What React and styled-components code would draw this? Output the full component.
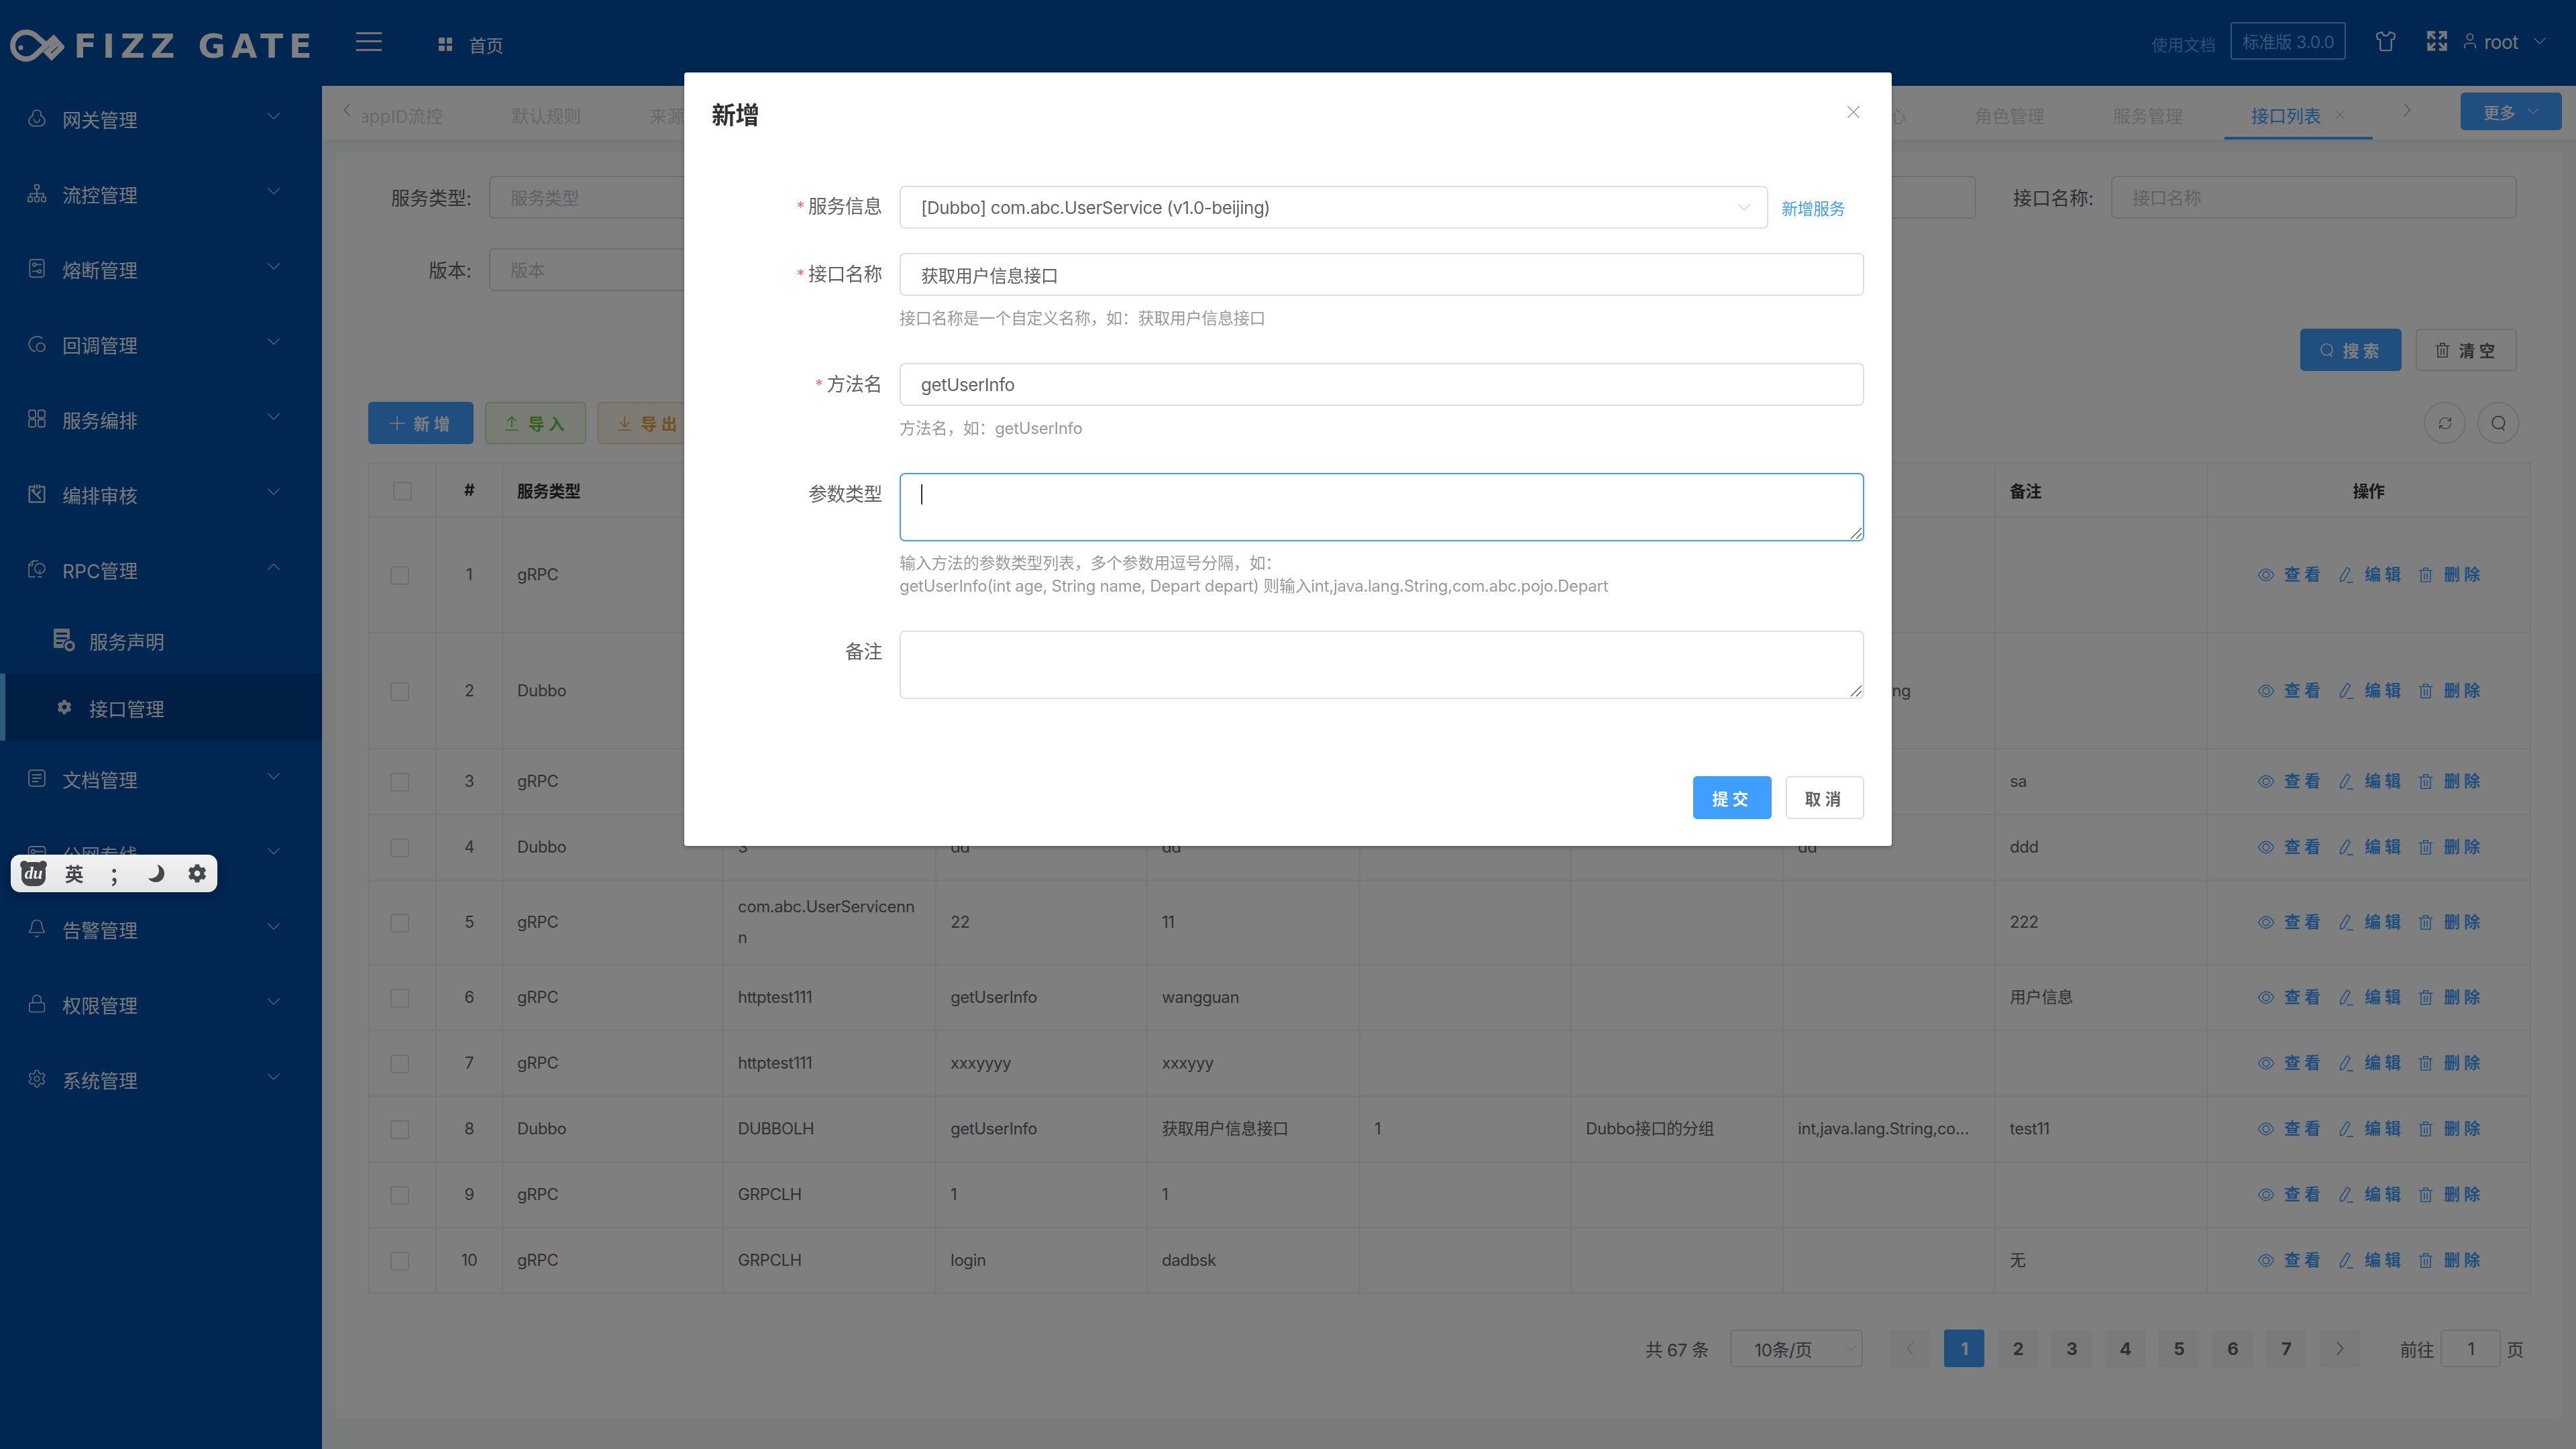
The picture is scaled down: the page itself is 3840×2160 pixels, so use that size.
import React from 'react';
import styled, { createGlobalStyle } from 'styled-components';
import { FaCog } from 'react-icons/fa';
import { Bell, Lock, Settings, Shirt, RefreshCw, User } from 'lucide-react';

const GlobalStyle = createGlobalStyle`
  html, body { margin: 0; padding: 0; height: 100%; overflow: hidden; }
  body { font-family: Inter, "Noto Sans CJK SC", "Noto Sans", sans-serif; background: #f5f7fa; color: #606266; }
  * { box-sizing: border-box; letter-spacing: -0.018em; }
`;

const PRIMARY = '#409eff';

const Shell = styled.div`
  display: grid;
  grid-template-columns: 480px 1fr;
  width: 3840px;
  height: 2160px;
  overflow: hidden;
`;

/* sidebar */
const Sidebar = styled.aside`
  background: #004ca4;
  color: #f0f4f8;
  display: flex;
  flex-direction: column;
`;
const LogoBar = styled.div`
  height: 120px;
  flex-shrink: 0;
  display: flex;
  align-items: center;
  padding: 18px 0 0 14px;
  color: #fff;
`;
const LogoText = styled.span`
  margin-left: 14px;
  font-family: "DejaVu Sans", sans-serif;
  font-weight: 700;
  font-size: 50px;
  line-height: 1;
  letter-spacing: 8.5px;
  white-space: nowrap;
`;
const NavItem = styled.div`
  height: ${p => (p.$sub ? 100 : 112)}px;
  flex-shrink: 0;
  display: flex;
  align-items: center;
  font-size: 28px;
  padding-left: ${p => (p.$sub ? (p.$active ? 68 : 76) : 40)}px;
  background: ${p => (p.$active ? '#003e8a' : 'transparent')};
  border-left: ${p => (p.$active ? `8px solid #5ab4ff` : '0')};
  color: #eef2f6;
`;
const NavIcon = styled.span`
  width: ${p => (p.$sub ? 40 : 30)}px;
  height: 34px;
  margin-right: ${p => (p.$sub ? 17 : 23)}px;
  display: flex;
  align-items: center;
  justify-content: center;
  flex-shrink: 0;
  color: #d4dae1;
`;
const NavLabel = styled.span`
  flex: 1;
  line-height: 40px;
  padding-top: 7px;
  letter-spacing: 0;
`;
const NavChevron = styled.span`
  width: 20px;
  margin-right: 62px;
  margin-top: -6px;
  display: flex;
  color: #dfe5ec;
`;

/* main column */
const Main = styled.div`
  display: flex;
  flex-direction: column;
  min-width: 0;
`;
const Topbar = styled.header`
  height: 128px;
  flex-shrink: 0;
  background: #004ca4;
  border-left: 2px solid rgba(0, 0, 0, 0.12);
  display: flex;
  align-items: center;
  color: #f0f0f0;
`;
const Burger = styled.div`
  margin-left: 49px;
  width: 38px;
  height: 28px;
  margin-top: -4px;
  border-top: 3px solid #e8e8e8;
  border-bottom: 3px solid #e8e8e8;
  position: relative;
  &::after {
    content: '';
    position: absolute;
    left: 0;
    right: 0;
    top: 9px;
    height: 3px;
    background: #e8e8e8;
  }
`;
const HomeTab = styled.div`
  margin-left: 85px;
  display: flex;
  align-items: center;
  gap: 25px;
  font-size: 26px;
  padding-top: 4px;
`;
const HomeGrid = styled.span`
  width: 20px;
  height: 20px;
  display: grid;
  grid-template-columns: 1fr 1fr;
  gap: 3px;
  & > i { background: #f0f0f0; border-radius: 1px; }
`;
const TopRight = styled.div`
  margin-left: auto;
  display: flex;
  align-items: center;
  padding-right: 44px;
`;
const DocLink = styled.span`
  font-size: 24px;
  letter-spacing: 0;
  color: #4ea0f0;
  margin-right: 22px;
  padding-top: 2px;
`;
const VersionBox = styled.span`
  width: 172px;
  height: 56px;
  border: 2px solid #5cb0ff;
  border-radius: 4px;
  font-size: 25px;
  color: #6ab0f5;
  display: flex;
  align-items: center;
  justify-content: center;
  margin-top: -6px;
  white-space: nowrap;
`;
const TopIconSlot = styled.span`
  display: flex;
  margin-left: ${p => p.$ml}px;
  margin-top: -6px;
`;
const UserName = styled.span`
  font-size: 28px;
  margin: -3px 22px 0 7px;
`;

/* tabs */
const TabBar = styled.div`
  height: 80px;
  flex-shrink: 0;
  background: #fff;
  display: flex;
  box-shadow: 0 3px 10px rgba(0, 0, 0, 0.06);
  position: relative;
`;
const TabArrow = styled.span`
  width: ${p => p.$w}px;
  flex-shrink: 0;
  display: flex;
  align-items: center;
  justify-content: ${p => p.$justify || 'center'};
  padding: ${p => p.$pad || 0};
  color: #9a9a9a;
  margin-top: -8px;
`;
const TabScroll = styled.div`
  flex: 1;
  min-width: 0;
  overflow: hidden;
  display: flex;
`;
const TabTrack = styled.div`
  display: flex;
  margin-left: -55px;
  flex-shrink: 0;
`;
const Tab = styled.div`
  height: 80px;
  padding: 6px ${p => (p.$active ? 0 : 51)}px 0 51px;
  display: flex;
  align-items: center;
  font-size: 26px;
  letter-spacing: 0;
  white-space: nowrap;
  color: ${p => (p.$active ? PRIMARY : '#d2d2d2')};
  position: relative;
  flex-shrink: 0;
  ${p => p.$active && `
    width: 232px;
    &::after {
      content: '';
      position: absolute;
      left: 11px;
      width: 221px;
      bottom: 0;
      height: 4px;
      background: ${PRIMARY};
    }
  `}
`;
const TabClose = styled.span`
  margin-left: 21px;
  display: flex;
`;
const MoreButton = styled.button`
  width: 151px;
  height: 56px;
  margin: 10px 21px 0 62px;
  flex-shrink: 0;
  border: 0;
  border-radius: 6px;
  background: ${PRIMARY};
  color: #fff;
  font: 500 24px Inter, "Noto Sans CJK SC", sans-serif;
  display: flex;
  align-items: center;
  justify-content: center;
  gap: 18px;
`;

/* content card */
const Content = styled.main`
  flex: 1;
  min-height: 0;
  padding: 20px 21px 46px 20px;
  background: #f5f7fa;
`;
const Card = styled.section`
  background: #fff;
  border-radius: 8px;
  height: 100%;
  padding: 34px 48px 0 49px;
`;
const FilterGrid = styled.div`
  display: grid;
  grid-template-columns: repeat(4, 785px);
  column-gap: 21px;
  row-gap: 44px;
`;
const FilterField = styled.div`
  display: flex;
  align-items: center;
  height: 64px;
`;
const FilterLabel = styled.label`
  width: 180px;
  padding-right: 26px;
  font-size: 28px;
  letter-spacing: 0;
  text-align: right;
  flex-shrink: 0;
  color: #606266;
  white-space: nowrap;
`;
const FilterInput = styled.div`
  flex: 1;
  height: 64px;
  padding: 0 30px 2px;
  border: 2px solid #dcdfe6;
  border-radius: 8px;
  color: #c0c4cc;
  font-size: 26px;
  display: flex;
  align-items: center;
`;
const ActionsRow = styled.div`
  margin-top: 56px;
  padding-right: 19px;
  display: flex;
  justify-content: flex-end;
  gap: 21px;
`;
const ToolRow = styled.div`
  margin-top: 46px;
  display: flex;
  align-items: center;
  gap: 17px;
`;
const ToolSpacer = styled.div`
  flex: 1;
`;
const tone = {
  primary: { bg: PRIMARY, fg: '#fff', bd: PRIMARY },
  plain: { bg: '#fff', fg: '#606266', bd: '#dcdfe6' },
  green: { bg: '#f0f9eb', fg: '#67c23a', bd: '#c2e7b0' },
  orange: { bg: '#fdf6ec', fg: '#e6a23c', bd: '#f5dab1' },
};
const Btn = styled.button`
  width: ${p => p.$w || 151}px;
  height: 63px;
  border: 2px solid ${p => tone[p.$tone].bd};
  background: ${p => tone[p.$tone].bg};
  color: ${p => tone[p.$tone].fg};
  border-radius: 6px;
  font: 600 24px Inter, "Noto Sans CJK SC", sans-serif;
  letter-spacing: 6px;
  display: flex;
  align-items: center;
  justify-content: center;
  gap: 12px;
  padding: 0;
`;
const CircleBtn = styled.button`
  width: 63px;
  height: 63px;
  border-radius: 50%;
  border: 2px solid #dcdfe6;
  background: #fff;
  color: #606266;
  display: flex;
  align-items: center;
  justify-content: center;
  padding: 0;
  margin-right: ${p => p.$mr || 0}px;
`;

/* table */
const Table = styled.table`
  margin-top: 27px;
  width: 3222px;
  table-layout: fixed;
  border-collapse: collapse;
  font-size: 24px;
  color: #606266;
`;
const Tr = styled.tr`
  height: ${p => p.$h}px;
`;
const Th = styled.th`
  border: 2px solid #ebeef5;
  padding: 0 21px;
  font-weight: 700;
  color: #303133;
  text-align: ${p => (p.$center ? 'center' : 'left')};
`;
const Td = styled.td`
  border: 2px solid #ebeef5;
  padding: 0 ${p => (p.$ops ? 0 : 21)}px;
  line-height: 46px;
  word-break: break-all;
  text-align: ${p => (p.$center ? 'center' : 'left')};
  ${p => p.$clip && 'white-space: nowrap; overflow: hidden; text-overflow: ellipsis;'}
`;
const CheckBox = styled.span`
  display: inline-block;
  vertical-align: middle;
  width: 28px;
  height: 28px;
  margin-right: ${p => (p.$row ? 8 : 0)}px;
  border: 2px solid #dcdfe6;
  border-radius: 4px;
  background: #fff;
`;
const Ops = styled.div`
  display: flex;
  align-items: center;
  justify-content: center;
  gap: 24px;
  white-space: nowrap;
  color: ${PRIMARY};
`;
const OpLink = styled.span`
  display: flex;
  align-items: center;
  gap: 14px;
  font-weight: 600;
  letter-spacing: 6px;
  margin-right: -6px;
`;

/* pagination */
const Pager = styled.div`
  margin-top: 53px;
  width: 3222px;
  padding-right: 9px;
  height: 56px;
  display: flex;
  justify-content: flex-end;
  align-items: center;
  font-size: 26px;
  color: #606266;
`;
const PagerSelect = styled.div`
  width: 198px;
  height: 56px;
  margin: 0 41px 0 32px;
  border: 2px solid #dcdfe6;
  border-radius: 6px;
  color: #606266;
  display: flex;
  align-items: center;
  justify-content: space-between;
  padding: 0 14px 0 34px;
  white-space: nowrap;
`;
const PageBtn = styled.span`
  width: 60px;
  height: 56px;
  margin-right: ${p => p.$mr ?? 20}px;
  border-radius: 4px;
  background: ${p => (p.$active ? PRIMARY : '#f4f4f5')};
  color: ${p => (p.$active ? '#fff' : p.$muted ? '#c0c4cc' : '#606266')};
  font-weight: 700;
  display: flex;
  align-items: center;
  justify-content: center;
`;
const PagerJump = styled.div`
  width: 90px;
  height: 56px;
  margin: 0 8px 0 10px;
  border: 2px solid #dcdfe6;
  border-radius: 6px;
  display: flex;
  align-items: center;
  justify-content: center;
`;
const PagerGo = styled.span`
  margin-left: 59px;
`;

/* dialog */
const Mask = styled.div`
  position: fixed;
  inset: 0;
  background: rgba(0, 0, 0, 0.5);
  display: flex;
  justify-content: center;
  padding-top: 108px;
  z-index: 10;
`;
const Dialog = styled.div`
  width: 1800px;
  height: 1153px;
  background: #fff;
  border-radius: 4px;
  box-shadow: 0 2px 6px rgba(0, 0, 0, 0.3);
`;
const DialogHead = styled.div`
  height: 168px;
  padding: 40px 46px 0 41px;
  display: flex;
  justify-content: space-between;
  align-items: flex-start;
`;
const DialogTitle = styled.h2`
  margin: 0;
  font-size: 36px;
  line-height: 48px;
  font-weight: 600;
  color: #303133;
`;
const DialogClose = styled.span`
  display: flex;
  margin-top: 8px;
  color: #909399;
`;
const DialogBody = styled.div`
  padding-right: 41px;
`;
const FormRow = styled.div`
  display: grid;
  grid-template-columns: 321px 1fr;
  margin-bottom: ${p => (p.$tight ? 35 : 49)}px;
`;
const FormLabel = styled.label`
  padding-right: 26px;
  text-align: right;
  font-size: 28px;
  line-height: 64px;
  color: #606266;
`;
const Star = styled.span`
  color: #f56c6c;
  margin-right: 6px;
  font-size: 24px;
`;
const SelectLine = styled.div`
  display: flex;
  align-items: center;
`;
const SelectBox = styled.div`
  width: 1295px;
  height: 64px;
  padding: 0 30px;
  border: 2px solid #dcdfe6;
  border-radius: 8px;
  font-size: 26px;
  color: #606266;
  display: flex;
  align-items: center;
  justify-content: space-between;
`;
const SelectArrow = styled.span`
  display: flex;
  color: #c0c4cc;
  margin-right: -6px;
`;
const AddLink = styled.a`
  margin-left: 20px;
  font-size: 24px;
  color: ${PRIMARY};
`;
const TextInput = styled.input`
  display: block;
  width: 100%;
  height: 64px;
  padding: 0 30px;
  border: 2px solid #dcdfe6;
  border-radius: 8px;
  outline: none;
  color: #606266;
  font: 26px Inter, "Noto Sans CJK SC", sans-serif;
`;
const AreaWrap = styled.div`
  position: relative;
  height: 102px;
`;
const Area = styled.textarea`
  display: block;
  width: 100%;
  height: 102px;
  padding: 12px 30px;
  border: 2px solid ${p => (p.$focus ? PRIMARY : '#dcdfe6')};
  border-radius: 8px;
  outline: none;
  resize: none;
  color: #606266;
  font: 26px Inter, "Noto Sans CJK SC", sans-serif;
`;
const Caret = styled.span`
  position: absolute;
  left: 32px;
  top: 17px;
  width: 2px;
  height: 30px;
  background: #303133;
`;
const Grip = styled.svg`
  position: absolute;
  right: 2px;
  bottom: 2px;
`;
const Hint = styled.div`
  margin-top: ${p => p.$mt || 17}px;
  font-size: 24px;
  letter-spacing: -0.3px;
  line-height: 34px;
  color: #999;
`;
const DialogFoot = styled.div`
  margin-top: 115px;
  display: flex;
  justify-content: flex-end;
  gap: 21px;
`;
const FootBtn = styled.button`
  width: 117px;
  height: 64px;
  border: 2px solid ${p => (p.$primary ? PRIMARY : '#dcdfe6')};
  background: ${p => (p.$primary ? PRIMARY : '#fff')};
  color: ${p => (p.$primary ? '#fff' : '#606266')};
  border-radius: 6px;
  font: 600 24px Inter, "Noto Sans CJK SC", sans-serif;
  letter-spacing: 6px;
  padding: 0;
`;

/* floating IME bar */
const ImeBar = styled.div`
  position: fixed;
  left: 16px;
  top: 1274px;
  width: 308px;
  height: 56px;
  border-radius: 14px;
  background: linear-gradient(#f2f2f2, #e4e4e4);
  box-shadow: 0 4px 20px rgba(0, 0, 0, 0.25);
  z-index: 20;
  color: #44474c;
  display: grid;
  grid-template-columns: repeat(5, 61px);
  align-items: center;
  padding-left: 3px;
`;
const ImeCell = styled.span`
  display: flex;
  justify-content: center;
  padding-left: ${p => p.$pl || 0}px;
  font-size: ${p => p.$fs || 28}px;
  font-weight: 700;
`;

/* drawings */
const Line = ({ size = 30, sw = 1.5, children, ...rest }) => (
  <svg width={size} height={size} viewBox="0 0 24 24" fill="none" stroke="currentColor" strokeWidth={sw} strokeLinecap="round" strokeLinejoin="round" {...rest}>
    {children}
  </svg>
);
const Down = ({ size = 20 }) => <Line size={size} sw={1.4}><path d="M2 7l10 10L22 7" /></Line>;
const Up = ({ size = 20 }) => <Line size={size} sw={1.4}><path d="M2 17L12 7l10 10" /></Line>;
const Left = ({ size = 22 }) => <Line size={size} sw={1.4}><path d="M16 2L7 12l9 10" /></Line>;
const Right = ({ size = 22 }) => <Line size={size} sw={1.4}><path d="M8 2l9 10-9 10" /></Line>;
const Close = ({ size = 22 }) => <Line size={size} sw={1.5}><path d="M3 3l18 18M21 3L3 21" /></Line>;
const Search = ({ size = 24 }) => <Line size={size} sw={1.6}><circle cx="11.5" cy="11" r="8.5" /><path d="M16.5 18.5l2.5 3" /></Line>;
const Trash = ({ size = 26 }) => <Line size={size} sw={1.5}><path d="M3 6h18M9 6V2.5h6V6M5.5 6v15.5h13V6M10 10v8M14 10v8" /></Line>;
const Eye = ({ size = 26 }) => <Line size={size} sw={1.4}><path d="M1.5 12C4.5 6.5 8 4 12 4s7.5 2.5 10.5 8c-3 5.5-6.5 8-10.5 8s-7.5-2.5-10.5-8z" /><circle cx="12" cy="12" r="4.5" /></Line>;
const Pen = ({ size = 28 }) => <Line size={size} sw={1.4}><path d="M13.5 2.5l4 2.5-8 14-4.5 1.5-.2-4.5zM14 21.5h7" /></Line>;
const ArrowUpLine = () => <Line size={26} sw={1.5}><path d="M12 17V3M6 9l6-6 6 6M4 21.5h16" /></Line>;
const ArrowDownLine = () => <Line size={26} sw={1.5}><path d="M12 3v14M6 11l6 6 6-6M4 21.5h16" /></Line>;
const Plus = () => <Line size={26} sw={1.3}><path d="M12 2v20M2 12h20" /></Line>;
const Fullscreen = () => (
  <Line size={34} sw={2.8} strokeLinecap="butt" strokeLinejoin="miter">
    <path d="M3 10V3h7M3 3l7 7M14 3h7v7M21 3l-7 7M3 14v7h7M3 21l7-7M21 14v7h-7M21 21l-7-7" />
  </Line>
);
const LogoMark = () => (
  <svg width="82" height="50" viewBox="0 0 82 50" fill="none" stroke="currentColor" strokeWidth="8" strokeLinejoin="miter">
    <path d="M57 25L39 9C35 6 30 4 25 4A20 20 0 0 0 25 44C31 44 35 42 39 38L66 13L78 26L63 41L56 34L66 25L62 21" />
    <circle cx="17" cy="27" r="3.5" fill="currentColor" stroke="none" />
  </svg>
);
const BearBadge = () => (
  <svg width="40" height="40" viewBox="0 0 40 40">
    <circle cx="6" cy="7" r="6" fill="#44474c" />
    <circle cx="34" cy="7" r="6" fill="#44474c" />
    <rect x="2" y="3" width="36" height="36" rx="13" fill="#44474c" />
    <text x="20" y="28" textAnchor="middle" fontFamily="Liberation Serif, serif" fontStyle="italic" fontWeight="700" fontSize="26" fill="#eee">du</text>
  </svg>
);
const Moon = () => (
  <svg width="26" height="28" viewBox="0 0 26 28"><path d="M14 1C19 2 25 6 25 14c0 8-6 13-12 13C8 27 3 25 1 21c8 2 16-3 16-11 0-4-1-7-3-9z" fill="#44474c" /></svg>
);

const navIcons = {
  gateway: <Line><path d="M12 2.5c-3 0-5 2-5 4.8 0 .6.1 1.2.3 1.7C4.6 10.3 2.5 12.8 2.5 15.5c0 3.5 2.8 6 6.5 6h6c3.7 0 6.5-2.5 6.5-6 0-2.700-2.100-5.200-4.800-6.500.2-.5.3-1.100.3-1.700 0-2.800-2-4.800-5-4.800z" /><path d="M8.5 13.5c.6 2.600 2 3.800 3.500 3.800s2.900-1.200 3.500-3.800" /></Line>,
  flow: <Line><rect x="9.5" y="2" width="5" height="5" rx=".8" /><rect x="1.5" y="16.5" width="5" height="5.500" rx=".8" /><rect x="9.5" y="16.5" width="5" height="5.500" rx=".8" /><rect x="17.5" y="16.5" width="5" height="5.500" rx=".8" /><path d="M12 7v9.5M4 16.5V12.5h16v4" /></Line>,
  fuse: <Line><rect x="3.5" y="1.5" width="17" height="21" rx="3" /><circle cx="9" cy="7.5" r="1.8" /><path d="M11 7.5h6M7 15.5h6" /><circle cx="15" cy="15.5" r="1.8" /></Line>,
  callback: <Line><path d="M18 5.5A10 10 0 0 0 2.5 12c0 5 3.5 9 7.5 9.5" /><circle cx="16.5" cy="16.5" r="5" /></Line>,
  compose: <Line><rect x="2.5" y="2" width="8" height="9" rx="2" /><rect x="13.5" y="2" width="8" height="9" rx="2" /><rect x="2.5" y="13" width="8" height="9" rx="2" /><rect x="13.5" y="13" width="8" height="9" rx="2" /></Line>,
  audit: <Line sw={2}><path d="M7 3.5H3V21c0 .5.5 1 1 1h16c.5 0 1-.5 1-1V3.500h-4" /><path d="M9 2v3M12 2v3M15 2v3" /><path d="M7 9l9 9M16 9l-4 4M6 8c1-1 2.500-1 3 0l-1 1" /></Line>,
  rpc: <Line sw={1.3}><path d="M13 2.500H7L2.500 7v14.500h7" /><path d="M2.500 7.500H7V3" /><circle cx="15.500" cy="11.500" r="6" /><path d="M13.500 21.500h4M15.500 17.500v-3.500" /></Line>,
  doc: <Line><rect x="2.5" y="2.5" width="19" height="19" rx="3" /><path d="M7 8h10M7 12h10M7 16h6" /></Line>,
  line: <Line><rect x="2" y="4" width="20" height="16" rx="3" /><circle cx="7.5" cy="10" r="2.2" /><path d="M9.7 10H19M5 15h6" /></Line>,
  alarm: <Bell size={32} strokeWidth={1.3} />,
  lock: <Lock size={32} strokeWidth={1.3} />,
  system: <Settings size={32} strokeWidth={1.3} />,
};
const DeclareIcon = () => (
  <svg width="34" height="36" viewBox="0 0 34 36">
    <path fill="currentColor" fillRule="evenodd" d="M1 3a2 2 0 0 1 2-2h20a2 2 0 0 1 2 2v14a9 9 0 0 0-9 12v1H3a2 2 0 0 1-2-2zM5 7v3h16V7zm0 7v3h16v-3zm0 7v3h9v-3z" />
    <circle cx="25" cy="27" r="6" fill="none" stroke="currentColor" strokeWidth="4" />
  </svg>
);

const menuTop = [
  ['网关管理', 'gateway'], ['流控管理', 'flow'], ['熔断管理', 'fuse'], ['回调管理', 'callback'],
  ['服务编排', 'compose'], ['编排审核', 'audit'],
];
const menuBottom = [
  ['文档管理', 'doc'], ['公网专线', 'line'], ['告警管理', 'alarm'], ['权限管理', 'lock'], ['系统管理', 'system'],
];

const MenuRow = ({ label, icon, open }) => (
  <NavItem>
    <NavIcon>{navIcons[icon]}</NavIcon>
    <NavLabel>{label}</NavLabel>
    <NavChevron>{open ? <Up /> : <Down />}</NavChevron>
  </NavItem>
);

const tabs = ['appID流控', '默认规则', '来源限流', '路由管理', '客户端管理', '负载均衡', '应用管理与权限配置及分组策略设置', '插件API', '灰度发布', '消息中心', '角色管理', '服务管理'];

const widths = [100, 99, 329, 317, 315, 317, 315, 316, 316, 316, 482];

const rows = [
  { h: 172, c: ['gRPC', 'com.abc.UserService', 'getUserInfo', '获取用户信息', '', '', '', ''] },
  { h: 173, c: ['Dubbo', 'com.abc.UserService', 'getUserInfo', '获取用户信息', 'v1.0', 'beijing', 'java.lang.String', ''] },
  { h: 98, c: ['gRPC', 'sa', 'sa', 'sa', '', '', '', 'sa'] },
  { h: 98, c: ['Dubbo', '3', 'dd', 'dd', '', '', 'dd', 'ddd'] },
  { h: 126, c: ['gRPC', 'com.abc.UserServicennn', '22', '11', '', '', '', '222'] },
  { h: 98, c: ['gRPC', 'httptest111', 'getUserInfo', 'wangguan', '', '', '', '用户信息'] },
  { h: 98, c: ['gRPC', 'httptest111', 'xxxyyyy', 'xxxyyy', '', '', '', ''] },
  { h: 98, c: ['Dubbo', 'DUBBOLH', 'getUserInfo', '获取用户信息接口', '1', 'Dubbo接口的分组', 'int,java.lang.String,com.abc.pojo.Depart', 'test11'] },
  { h: 98, c: ['gRPC', 'GRPCLH', '1', '1', '', '', '', ''] },
  { h: 98, c: ['gRPC', 'GRPCLH', 'login', 'dadbsk', '', '', '', '无'] },
];
const headers = ['服务类型', '服务名', '方法名', '接口名称', '版本', '分组', '参数类型', '备注'];

const ResizeGrip = () => (
  <Grip width="20" height="20" viewBox="0 0 20 20" stroke="#555" strokeWidth="1.4">
    <path d="M2 18L18 2M10 18l8-8" />
  </Grip>
);

const App = () => (
  <>
    <GlobalStyle />
    <Shell>
      <Sidebar>
        <LogoBar>
          <LogoMark />
          <LogoText>FIZZ GATE</LogoText>
        </LogoBar>
        {menuTop.map(([label, icon]) => <MenuRow key={label} label={label} icon={icon} />)}
        <MenuRow label="RPC管理" icon="rpc" open />
        <NavItem $sub>
          <NavIcon $sub><DeclareIcon /></NavIcon>
          <NavLabel>服务声明</NavLabel>
        </NavItem>
        <NavItem $sub $active>
          <NavIcon $sub><FaCog size={22} /></NavIcon>
          <NavLabel>接口管理</NavLabel>
        </NavItem>
        {menuBottom.map(([label, icon]) => <MenuRow key={label} label={label} icon={icon} />)}
      </Sidebar>

      <Main>
        <Topbar>
          <Burger />
          <HomeTab>
            <HomeGrid><i /><i /><i /><i /></HomeGrid>
            首页
          </HomeTab>
          <TopRight>
            <DocLink>使用文档</DocLink>
            <VersionBox>标准版 3.0.0</VersionBox>
            <TopIconSlot $ml={43}><Shirt size={33} strokeWidth={1.6} /></TopIconSlot>
            <TopIconSlot $ml={43}><Fullscreen /></TopIconSlot>
            <TopIconSlot $ml={18}><User size={28} strokeWidth={1.4} /></TopIconSlot>
            <UserName>root</UserName>
            <TopIconSlot $ml={0}><Down size={20} /></TopIconSlot>
          </TopRight>
        </Topbar>

        <TabBar>
          <TabArrow $w={60} $justify="flex-start" $pad="0 0 0 27px"><Left /></TabArrow>
          <TabScroll>
            <TabTrack>
              {tabs.map(t => <Tab key={t}>{t}</Tab>)}
              <Tab $active>接口列表<TabClose><Close size={14} /></TabClose></Tab>
            </TabTrack>
          </TabScroll>
          <TabArrow $w={36}><Right /></TabArrow>
          <MoreButton>更多 <Down size={18} /></MoreButton>
        </TabBar>

        <Content>
          <Card>
            <FilterGrid>
              <FilterField><FilterLabel>服务类型:</FilterLabel><FilterInput>服务类型</FilterInput></FilterField>
              <FilterField><FilterLabel>服务名:</FilterLabel><FilterInput>服务名</FilterInput></FilterField>
              <FilterField><FilterLabel>方法名:</FilterLabel><FilterInput>方法名</FilterInput></FilterField>
              <FilterField><FilterLabel>接口名称:</FilterLabel><FilterInput>接口名称</FilterInput></FilterField>
              <FilterField><FilterLabel>版本:</FilterLabel><FilterInput>版本</FilterInput></FilterField>
            </FilterGrid>
            <ActionsRow>
              <Btn $tone="primary"><Search />搜索</Btn>
              <Btn $tone="plain"><Trash />清空</Btn>
            </ActionsRow>
            <ToolRow>
              <Btn $w={157} $tone="primary"><Plus />新增</Btn>
              <Btn $tone="green"><ArrowUpLine />导入</Btn>
              <Btn $tone="orange"><ArrowDownLine />导出</Btn>
              <ToolSpacer />
              <CircleBtn $mr={0}><RefreshCw size={22} strokeWidth={1.3} /></CircleBtn>
              <CircleBtn $mr={15}><Search size={26} /></CircleBtn>
            </ToolRow>
            <Table>
              <colgroup>{widths.map((w, i) => <col key={i} width={w} />)}</colgroup>
              <thead>
                <Tr $h={81}>
                  <Th $center><CheckBox /></Th>
                  <Th $center>#</Th>
                  {headers.map(h => <Th key={h}>{h}</Th>)}
                  <Th $center>操作</Th>
                </Tr>
              </thead>
              <tbody>
                {rows.map((r, i) => (
                  <Tr key={i} $h={r.h}>
                    <Td $center><CheckBox $row /></Td>
                    <Td $center>{i + 1}</Td>
                    {r.c.map((v, j) => <Td key={j} $clip={j === 6}>{v}</Td>)}
                    <Td $ops>
                      <Ops>
                        <OpLink><Eye />查看</OpLink>
                        <OpLink><Pen />编辑</OpLink>
                        <OpLink><Trash />删除</OpLink>
                      </Ops>
                    </Td>
                  </Tr>
                ))}
              </tbody>
            </Table>
            <Pager>
              共 67 条
              <PagerSelect>10条/页<SelectArrow><Down size={16} /></SelectArrow></PagerSelect>
              <PageBtn $muted><Left /></PageBtn>
              <PageBtn $active>1</PageBtn>
              {[2, 3, 4, 5, 6, 7].map(n => <PageBtn key={n}>{n}</PageBtn>)}
              <PageBtn $mr={0}><Right /></PageBtn>
              <PagerGo>前往</PagerGo>
              <PagerJump>1</PagerJump>
              页
            </Pager>
          </Card>
        </Content>
      </Main>
    </Shell>

    <Mask>
      <Dialog>
        <DialogHead>
          <DialogTitle>新增</DialogTitle>
          <DialogClose><Close size={22} /></DialogClose>
        </DialogHead>
        <DialogBody>
          <FormRow $tight>
            <FormLabel><Star>*</Star>服务信息</FormLabel>
            <SelectLine>
              <SelectBox>
                [Dubbo] com.abc.UserService (v1.0-beijing)
                <SelectArrow><Down size={20} /></SelectArrow>
              </SelectBox>
              <AddLink>新增服务</AddLink>
            </SelectLine>
          </FormRow>
          <FormRow>
            <FormLabel><Star>*</Star>接口名称</FormLabel>
            <div>
              <TextInput defaultValue="获取用户信息接口" />
              <Hint>接口名称是一个自定义名称，如：获取用户信息接口</Hint>
            </div>
          </FormRow>
          <FormRow>
            <FormLabel><Star>*</Star>方法名</FormLabel>
            <div>
              <TextInput defaultValue="getUserInfo" />
              <Hint>方法名，如：getUserInfo</Hint>
            </div>
          </FormRow>
          <FormRow>
            <FormLabel>参数类型</FormLabel>
            <div>
              <AreaWrap>
                <Area $focus />
                <Caret />
                <ResizeGrip />
              </AreaWrap>
              <Hint $mt={16}>
                输入方法的参数类型列表，多个参数用逗号分隔，如：<br />
                getUserInfo(int age, String name, Depart depart) 则输入int,java.lang.String,com.abc.pojo.Depart
              </Hint>
            </div>
          </FormRow>
          <FormRow>
            <FormLabel>备注</FormLabel>
            <AreaWrap><Area /><ResizeGrip /></AreaWrap>
          </FormRow>
          <DialogFoot>
            <FootBtn $primary>提交</FootBtn>
            <FootBtn>取消</FootBtn>
          </DialogFoot>
        </DialogBody>
      </Dialog>
    </Mask>

    <ImeBar>
      <ImeCell><BearBadge /></ImeCell>
      <ImeCell>英</ImeCell>
      <ImeCell $fs={30} $pl={12}>；</ImeCell>
      <ImeCell><Moon /></ImeCell>
      <ImeCell><FaCog size={28} /></ImeCell>
    </ImeBar>
  </>
);

export default App;
